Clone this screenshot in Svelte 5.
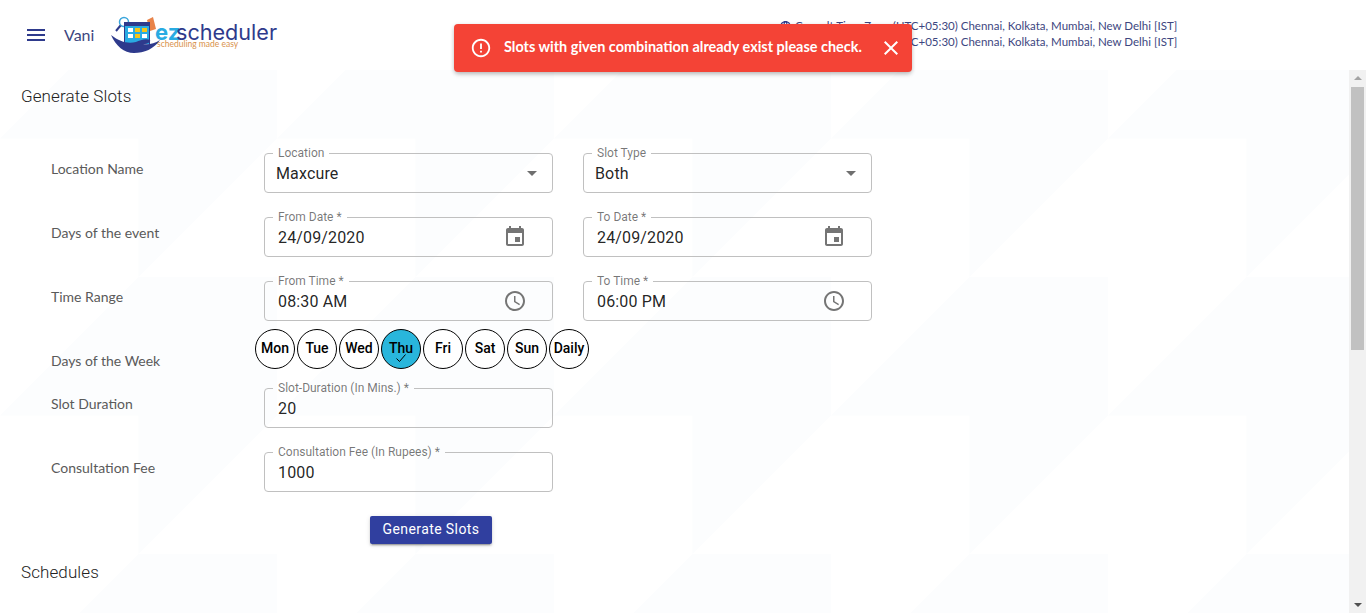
<script>
  const pattern =
    "url(\"data:image/svg+xml,%3Csvg xmlns='http://www.w3.org/2000/svg' width='277' height='277'%3E%3Cpath fill='%23fcfdfe' d='M0 138.5 138.5 0H277V138.5L138.5 277V138.5Z'/%3E%3C/svg%3E\")";

  const days = ["Mon", "Tue", "Wed", "Thu", "Fri", "Sat", "Sun", "Daily"];
  let selected = "Thu";

  const calendar =
    "M17 12h-5v5h5v-5zM16 1v2H8V1H6v2H5c-1.11 0-1.99.9-1.99 2L3 19c0 1.1.89 2 2 2h14c1.1 0 2-.9 2-2V5c0-1.1-.9-2-2-2h-1V1h-2zm3 18H5V8h14v11z";
  const clock =
    "M11.99 2C6.47 2 2 6.48 2 12s4.47 10 9.99 10C17.52 22 22 17.52 22 12S17.52 2 11.99 2zM12 20c-4.42 0-8-3.58-8-8s3.58-8 8-8 8 3.58 8 8-3.58 8-8 8zM12.5 7H11v6l5.25 3.15.75-1.23-4.5-2.67z";
  const arrow = "M7 10l5 5 5-5z";
</script>

{#snippet field(label, value, icon, isSelect)}
  <div class="field" class:select={isSelect}>
    <span class="value">{value}</span>
    {#if icon}
      <svg class="icon" class:arrow={isSelect} viewBox="0 0 24 24" width="24" height="24"><path d={icon} /></svg>
    {/if}
    <fieldset><legend>{label}</legend></fieldset>
  </div>
{/snippet}

<div class="page">
  <header>
    <svg class="menu" viewBox="0 0 24 24" width="24" height="24"><path d="M3 18h18v-2H3v2zm0-5h18v-2H3v2zm0-7v2h18V6H3z" /></svg>
    <span class="user">Vani</span>
    <svg class="logo" viewBox="0 0 172 42" width="172" height="42">
      <circle cx="14" cy="9" r="4.500" fill="#fff" stroke="#3aa6dc" stroke-width="1.500" />
      <path d="M10.500 12.500 6 18" stroke="#2e3a8c" stroke-width="2" />
      <path d="M37 7l6-3 3 12-6 2z" fill="#e8834a" />
      <rect x="14" y="9" width="26" height="22" fill="#2e3a8c" />
      <rect x="15" y="13" width="24" height="18" fill="#29abe2" />
      <rect x="18" y="15" width="5" height="4" fill="#fff" />
      <rect x="25" y="15" width="5" height="4" fill="#f5c518" />
      <rect x="32" y="15" width="5" height="4" fill="#f5c518" />
      <rect x="18" y="21" width="5" height="4" fill="#fff" />
      <rect x="25" y="21" width="5" height="4" fill="#f5c518" />
      <rect x="32" y="21" width="5" height="4" fill="#fff" />
      <path d="M1 22C10 29 18 31 26 29 30 27 36 25 40 27 41 29 38 31 33 31 38 32 44 31 50 27 44 36 34 40 24 40 14 40 6 33 1 22Z" fill="#2e3a8c" />
      <text class="ez" x="45" y="27">ez</text>
      <text class="sched" x="66" y="27">scheduler</text>
      <text class="tag" x="47" y="34">scheduling made easy</text>
    </svg>
    <div class="zones">
      <div>
        <svg viewBox="0 0 24 24" width="13" height="13"><path d="M11.990 2C6.470 2 2 6.480 2 12s4.470 10 9.990 10C17.520 22 22 17.520 22 12S17.520 2 11.990 2zm6.930 6h-2.950c-.32-1.250-.78-2.450-1.380-3.560 1.840.63 3.370 1.910 4.330 3.560zM12 4.040c.83 1.200 1.480 2.530 1.910 3.960h-3.820c.43-1.430 1.080-2.760 1.910-3.960zM4.260 14C4.100 13.360 4 12.690 4 12s.1-1.360.26-2h3.380c-.08.66-.14 1.320-.14 2 0 .68.06 1.340.14 2H4.260zm.82 2h2.950c.32 1.250.78 2.450 1.380 3.560-1.840-.63-3.370-1.900-4.330-3.560zm2.950-8H5.080c.96-1.660 2.490-2.930 4.330-3.560C8.810 5.550 8.350 6.750 8.030 8zM12 19.960c-.83-1.200-1.480-2.530-1.910-3.960h3.820c-.43 1.430-1.080 2.760-1.910 3.960zM14.340 14H9.660c-.09-.66-.16-1.320-.16-2 0-.68.07-1.350.16-2h4.680c.09.65.16 1.320.16 2 0 .68-.07 1.340-.16 2zm.25 5.560c.6-1.110 1.060-2.310 1.380-3.560h2.950c-.96 1.650-2.490 2.930-4.330 3.560zM16.360 14c.08-.66.14-1.320.14-2 0-.68-.06-1.340-.14-2h3.380c.16.64.26 1.310.26 2s-.1 1.360-.26 2h-3.380z" /></svg>
        Consult Time Zone (UTC+05:30) Chennai, Kolkata, Mumbai, New Delhi [IST]
      </div>
      <div>Current Time Zone (UTC+05:30) Chennai, Kolkata, Mumbai, New Delhi [IST]</div>
    </div>
  </header>

  <div class="toast">
    <svg viewBox="0 0 24 24" width="22" height="22"><path d="M11 15h2v2h-2zm0-8h2v6h-2zm.99-5C6.470 2 2 6.480 2 12s4.470 10 9.990 10C17.520 22 22 17.520 22 12S17.520 2 11.990 2zM12 20c-4.420 0-8-3.580-8-8s3.580-8 8-8 8 3.580 8 8-3.580 8-8 8z" /></svg>
    <span>Slots with given combination already exist please check.</span>
    <svg viewBox="0 0 24 24" width="24" height="24"><path d="M19 6.410L17.590 5 12 10.590 6.410 5 5 6.410 10.590 12 5 17.590 6.410 19 12 13.410 17.590 19 19 17.590 13.410 12z" /></svg>
  </div>

  <div class="body">
    <main style:background-image={pattern}>
      <h2>Generate Slots</h2>
      <form>
        <div class="row">
          <span class="label">Location Name</span>
          {@render field("Location", "Maxcure", arrow, true)}
          {@render field("Slot Type", "Both", arrow, true)}
        </div>
        <div class="row">
          <span class="label">Days of the event</span>
          {@render field("From Date *", "24/09/2020", calendar)}
          {@render field("To Date *", "24/09/2020", calendar)}
        </div>
        <div class="row">
          <span class="label">Time Range</span>
          {@render field("From Time *", "08:30 AM", clock)}
          {@render field("To Time *", "06:00 PM", clock)}
        </div>
        <div class="row days-row">
          <span class="label">Days of the Week</span>
          <div class="days">
            {#each days as day}
              <button type="button" class="day" class:on={day === selected} onclick={() => (selected = day)}>
                {day}
                {#if day === selected}
                  <svg viewBox="0 0 12 10" width="12" height="10"><path d="M1.500 5.500 4.500 8.500 10.500 1.500" /></svg>
                {/if}
              </button>
            {/each}
          </div>
        </div>
        <div class="row">
          <span class="label">Slot Duration</span>
          {@render field("Slot-Duration (In Mins.) *", "20")}
        </div>
        <div class="row">
          <span class="label">Consultation Fee</span>
          {@render field("Consultation Fee (In Rupees) *", "1000")}
        </div>
        <div class="row">
          <span></span>
          <div class="actions"><button type="button" class="generate">Generate Slots</button></div>
        </div>
      </form>
      <h2 class="second">Schedules</h2>
    </main>
    <div class="scrollbar">
      <span class="up"></span>
      <span class="thumb"></span>
      <span class="down"></span>
    </div>
  </div>
</div>

<style>
  :global(body) {
    overflow: hidden;
    background: #fff;
  }

  .page {
    position: relative;
    height: 613px;
    display: flex;
    flex-direction: column;
    overflow: hidden;
    font-family: Roboto, sans-serif;
  }

  header {
    height: 70px;
    flex: none;
    display: flex;
    align-items: center;
    padding-left: 24px;
    color: #2e3a8c;
  }

  .menu {
    fill: #2e3a8c;
  }

  .user {
    margin: -2px 0 0 16px;
    width: 46px;
    font: 16px Lato, sans-serif;
    color: #3d4680;
  }

  .logo {
    flex: none;
    margin-top: -2px;
  }

  .logo .ez {
    font: 700 22px Inter, sans-serif;
    fill: #29abe2;
  }

  .logo .sched {
    font: 400 21.600px Inter, sans-serif;
    fill: #2e3a8c;
  }

  .logo .tag {
    font: 8.500px Lato, sans-serif;
    fill: #d9924a;
  }

  .zones {
    margin-left: 497px;
    font: 11.500px/16px Lato, sans-serif;
    color: #3d4680;
    text-align: right;
    margin-top: -2px;
    white-space: nowrap;
  }

  .zones svg {
    fill: #2e3a8c;
    vertical-align: -3px;
  }

  .toast {
    position: absolute;
    left: 454px;
    top: 24px;
    width: 458px;
    height: 48px;
    box-sizing: border-box;
    padding: 0 9px 0 16px;
    display: flex;
    align-items: center;
    background: #f44336;
    color: #fff;
    border-radius: 4px;
    box-shadow: 0 3px 5px -1px rgba(0, 0, 0, 0.2), 0 1px 4px rgba(0, 0, 0, 0.14);
    font: 700 14.450px Lato, sans-serif;
  }

  .toast span {
    margin: -3px 0 0 12px;
    flex: 1;
  }

  .toast svg {
    fill: #fff;
    flex: none;
  }

  .body {
    flex: 1;
    display: flex;
    min-height: 0;
  }

  main {
    flex: 1;
    background-position: 0 -70px;
    padding: 17px 0 0 21px;
  }

  h2 {
    margin: 0;
    font: 300 17px/18px Roboto, sans-serif;
    letter-spacing: 0.1px;
    color: #222;
  }

  h2.second {
    margin-top: 19px;
  }

  form {
    margin-top: 48px;
    display: flex;
    flex-direction: column;
    gap: 24px;
    padding-left: 30px;
  }

  .row {
    display: grid;
    grid-template-columns: 183px 289px 289px;
    column-gap: 30px;
  }

  .label {
    font: 14px/32px Lato, sans-serif;
    color: #5a5a5a;
  }

  .field {
    position: relative;
    height: 40px;
    box-sizing: border-box;
    display: flex;
    align-items: center;
    justify-content: space-between;
    padding: 0 26px 0 14px;
  }

  .field.select {
    padding: 0 9px 0 12px;
  }

  .value {
    font-size: 16px;
    letter-spacing: 0.15px;
    color: rgba(0, 0, 0, 0.87);
  }

  .icon {
    fill: #757575;
    flex: none;
  }

  .icon.arrow {
    fill: #6f6f6f;
  }

  fieldset {
    position: absolute;
    inset: -5px 0 0;
    margin: 0;
    padding: 0 8px;
    border: 1px solid #c0c0c0;
    border-radius: 4px;
    pointer-events: none;
  }

  legend {
    padding: 0 5px;
    font-size: 12px;
    line-height: 11px;
    color: rgba(0, 0, 0, 0.54);
  }

  .days-row {
    height: 40px;
    margin: -16px 0 -5px;
  }

  .days-row .label {
    line-height: 64px;
  }

  .days {
    grid-column: 2 / 4;
    margin-left: -9px;
    display: flex;
    gap: 2px;
    height: 40px;
  }

  .day {
    position: relative;
    width: 40px;
    height: 40px;
    flex: none;
    padding: 0 0 2px;
    border: 1px solid #000;
    border-radius: 50%;
    background: #fff;
    color: #000;
    font: 500 14px Roboto, sans-serif;
  }

  .day.on {
    background: #29b6dc;
  }

  .day svg {
    position: absolute;
    left: 13px;
    top: 23px;
    fill: none;
    stroke: #000;
    stroke-width: 1;
  }

  .actions {
    display: flex;
    padding-left: 106px;
  }

  .generate {
    width: 122px;
    height: 28px;
    padding: 0 0 2px;
    border: 0;
    border-radius: 2px;
    background: #303f9f;
    color: #fff;
    font: 400 14px Roboto, sans-serif;
    letter-spacing: 0.4px;
    box-shadow: 0 3px 1px -2px rgba(0, 0, 0, 0.2), 0 2px 2px rgba(0, 0, 0, 0.14), 0 1px 5px rgba(0, 0, 0, 0.12);
  }

  .scrollbar {
    width: 17px;
    flex: none;
    background: #f1f1f1;
    display: flex;
    flex-direction: column;
    align-items: center;
  }

  .up,
  .down {
    height: 0;
    width: 0;
    border-left: 4px solid transparent;
    border-right: 4px solid transparent;
  }

  .up {
    margin-top: 6px;
    border-bottom: 4px solid #a3a3a3;
  }

  .thumb {
    width: 13px;
    height: 263px;
    margin: 7px 0 auto;
    background: #c1c1c1;
  }

  .down {
    margin-bottom: 6px;
    border-top: 4px solid #505050;
  }
</style>
